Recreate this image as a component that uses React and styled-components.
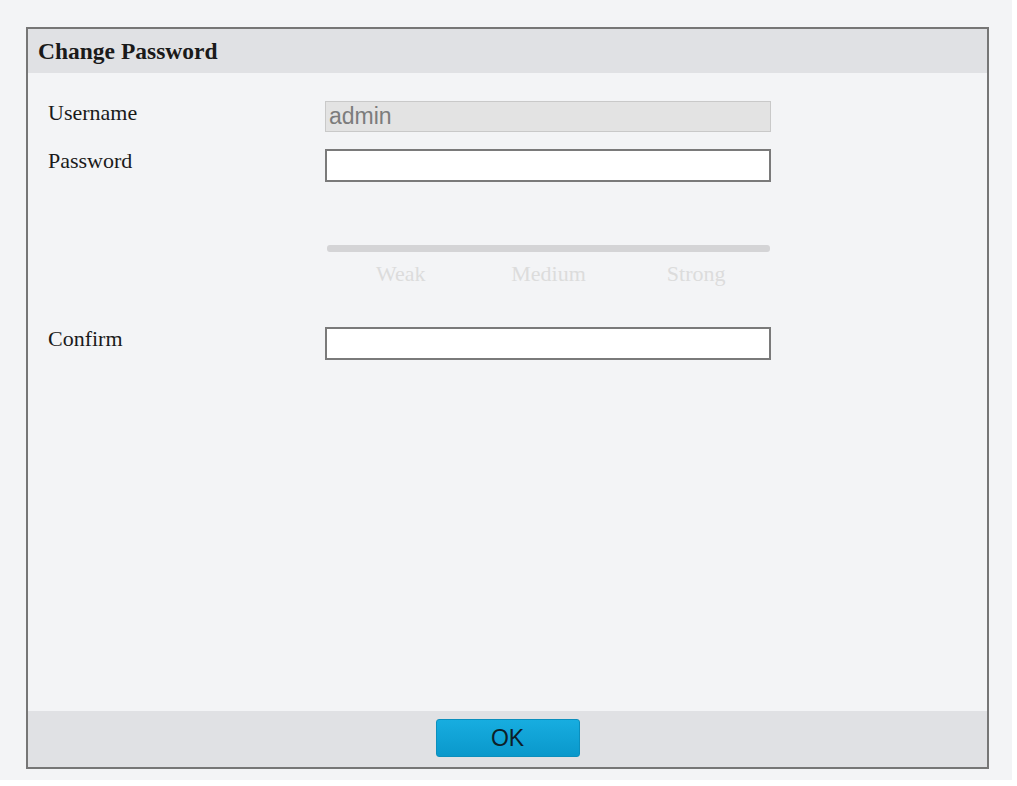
import React from 'react';
import styled, { createGlobalStyle } from 'styled-components';

const colors = {
  page: '#f3f4f6',
  band: '#e0e1e4',
  frame: '#767676',
  text: '#1a1a1a',
  faint: '#dcdcdc',
};

const GlobalStyle = createGlobalStyle`
  html, body {
    margin: 0;
    padding: 0;
    background: #ffffff;
  }
`;

const Page = styled.div`
  width: 1012px;
  height: 780px;
  box-sizing: border-box;
  padding: 27px 0 0 26px;
  background: ${colors.page};
`;

const Dialog = styled.div`
  width: 963px;
  height: 742px;
  box-sizing: border-box;
  border: 2px solid ${colors.frame};
  display: flex;
  flex-direction: column;
  background: ${colors.page};
`;

const Header = styled.div`
  height: 44px;
  display: flex;
  align-items: center;
  padding-left: 10px;
  background: ${colors.band};
  font-family: "Liberation Serif", "Times New Roman", serif;
  font-weight: bold;
  font-size: 23.5px;
  color: ${colors.text};
`;

const Body = styled.div`
  flex: 1;
  padding: 28px 0 0 20px;
  display: flex;
  flex-direction: column;
`;

const Row = styled.div`
  display: flex;
  align-items: flex-start;
  margin-bottom: ${(p) => p.gap || 0}px;
`;

const Label = styled.div`
  width: 277px;
  line-height: 24px;
  font-family: "Liberation Serif", "Times New Roman", serif;
  font-size: 22px;
  color: ${colors.text};
`;

const Input = styled.div`
  width: 446px;
  height: ${(p) => (p.disabled ? 31 : 33)}px;
  box-sizing: border-box;
  border: ${(p) => (p.disabled ? '1px solid #c9c9c9' : '2px solid #7a7a7a')};
  background: ${(p) => (p.disabled ? '#e3e3e3' : '#ffffff')};
  display: flex;
  align-items: center;
  padding-left: 3px;
  font-family: "Liberation Sans", Arial, sans-serif;
  font-size: 23px;
  color: #7c7c7c;
`;

const Strength = styled.div`
  margin-left: 279px;
  width: 443px;
  margin-top: 63px;
  margin-bottom: 41px;
`;

const Bar = styled.div`
  height: 7px;
  border-radius: 3px;
  background: #d4d4d6;
`;

const Levels = styled.div`
  display: grid;
  grid-template-columns: repeat(3, 1fr);
  margin-top: 10px;
  line-height: 24px;
  text-align: center;
  font-family: "Liberation Serif", "Times New Roman", serif;
  font-size: 22px;
  color: ${colors.faint};
`;

const Footer = styled.div`
  height: 56px;
  background: ${colors.band};
  display: flex;
  justify-content: center;
  padding-top: 8px;
  box-sizing: border-box;
`;

const OkButton = styled.button`
  width: 144px;
  height: 38px;
  border: 1px solid #0b8fbd;
  border-radius: 3px;
  background: linear-gradient(#17ade0, #0a98cb);
  font-family: "Liberation Sans", Arial, sans-serif;
  font-size: 23px;
  color: #0d1e28;
  padding: 0;
  cursor: pointer;
`;

const App = () => (
  <>
    <GlobalStyle />
    <Page>
      <Dialog>
        <Header>Change Password</Header>
        <Body>
          <Row gap={17}>
            <Label>Username</Label>
            <Input disabled>admin</Input>
          </Row>
          <Row>
            <Label>Password</Label>
            <Input />
          </Row>
          <Strength>
            <Bar />
            <Levels>
              <span>Weak</span>
              <span>Medium</span>
              <span>Strong</span>
            </Levels>
          </Strength>
          <Row>
            <Label>Confirm</Label>
            <Input />
          </Row>
        </Body>
        <Footer>
          <OkButton>OK</OkButton>
        </Footer>
      </Dialog>
    </Page>
  </>
);

export default App;
